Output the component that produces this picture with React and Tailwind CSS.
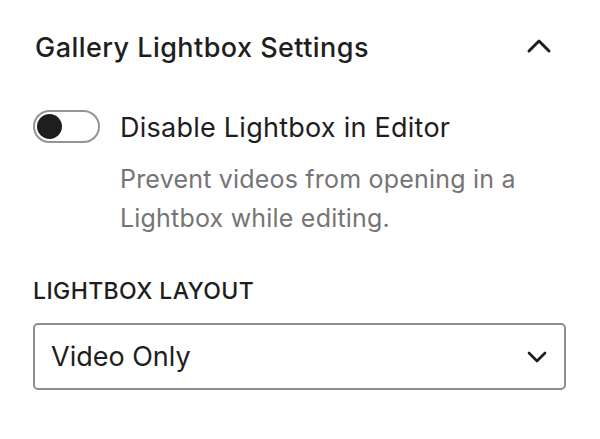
import { ChevronUp, ChevronDown } from 'lucide-react'

export default function App() {
  return (
    <div className="w-[600px] h-[439px] bg-white text-[#1e1e1e] font-['Inter',sans-serif] px-[33px] pt-[29px]">
      {/* Panel header */}
      <div className="flex items-center justify-between h-[37px]">
        <h2 className="text-[27px] leading-[37px] font-medium tracking-[0.45px] pl-[2px]">Gallery Lightbox Settings</h2>
        <ChevronUp className="w-[40px] h-[40px] mr-[8px] -mt-[4px]" strokeWidth={1.8} />
      </div>

      {/* Toggle */}
      <div className="flex items-center gap-[20px] mt-[44px] h-[33px]">
        <div className="w-[67px] h-[33px] rounded-full border-2 border-[#949494] flex items-center pl-[2px] shrink-0">
          <span className="w-[25px] h-[25px] rounded-full bg-[#1e1e1e]" />
        </div>
        <span className="text-[27px] leading-[33px] tracking-[0.25px] pt-[2px]">Disable Lightbox in Editor</span>
      </div>
      <p className="ml-[87px] mt-[17px] text-[25px] leading-[39px] tracking-[0.2px] text-[#757575]">
        Prevent videos from opening in a
        <br />
        Lightbox while editing.
      </p>

      {/* Select */}
      <div className="mt-[38px] text-[23px] leading-[30px] font-medium tracking-[0.4px] uppercase">Lightbox Layout</div>
      <div className="mt-[17px] h-[67px] w-[533px] rounded-[5px] border-2 border-[#8d8d8d] flex items-center justify-between pl-[16px] pr-[11px]">
        <span className="text-[27px] pt-[2px]">Video Only</span>
        <ChevronDown className="w-[32px] h-[32px]" strokeWidth={2} />
      </div>
    </div>
  )
}
